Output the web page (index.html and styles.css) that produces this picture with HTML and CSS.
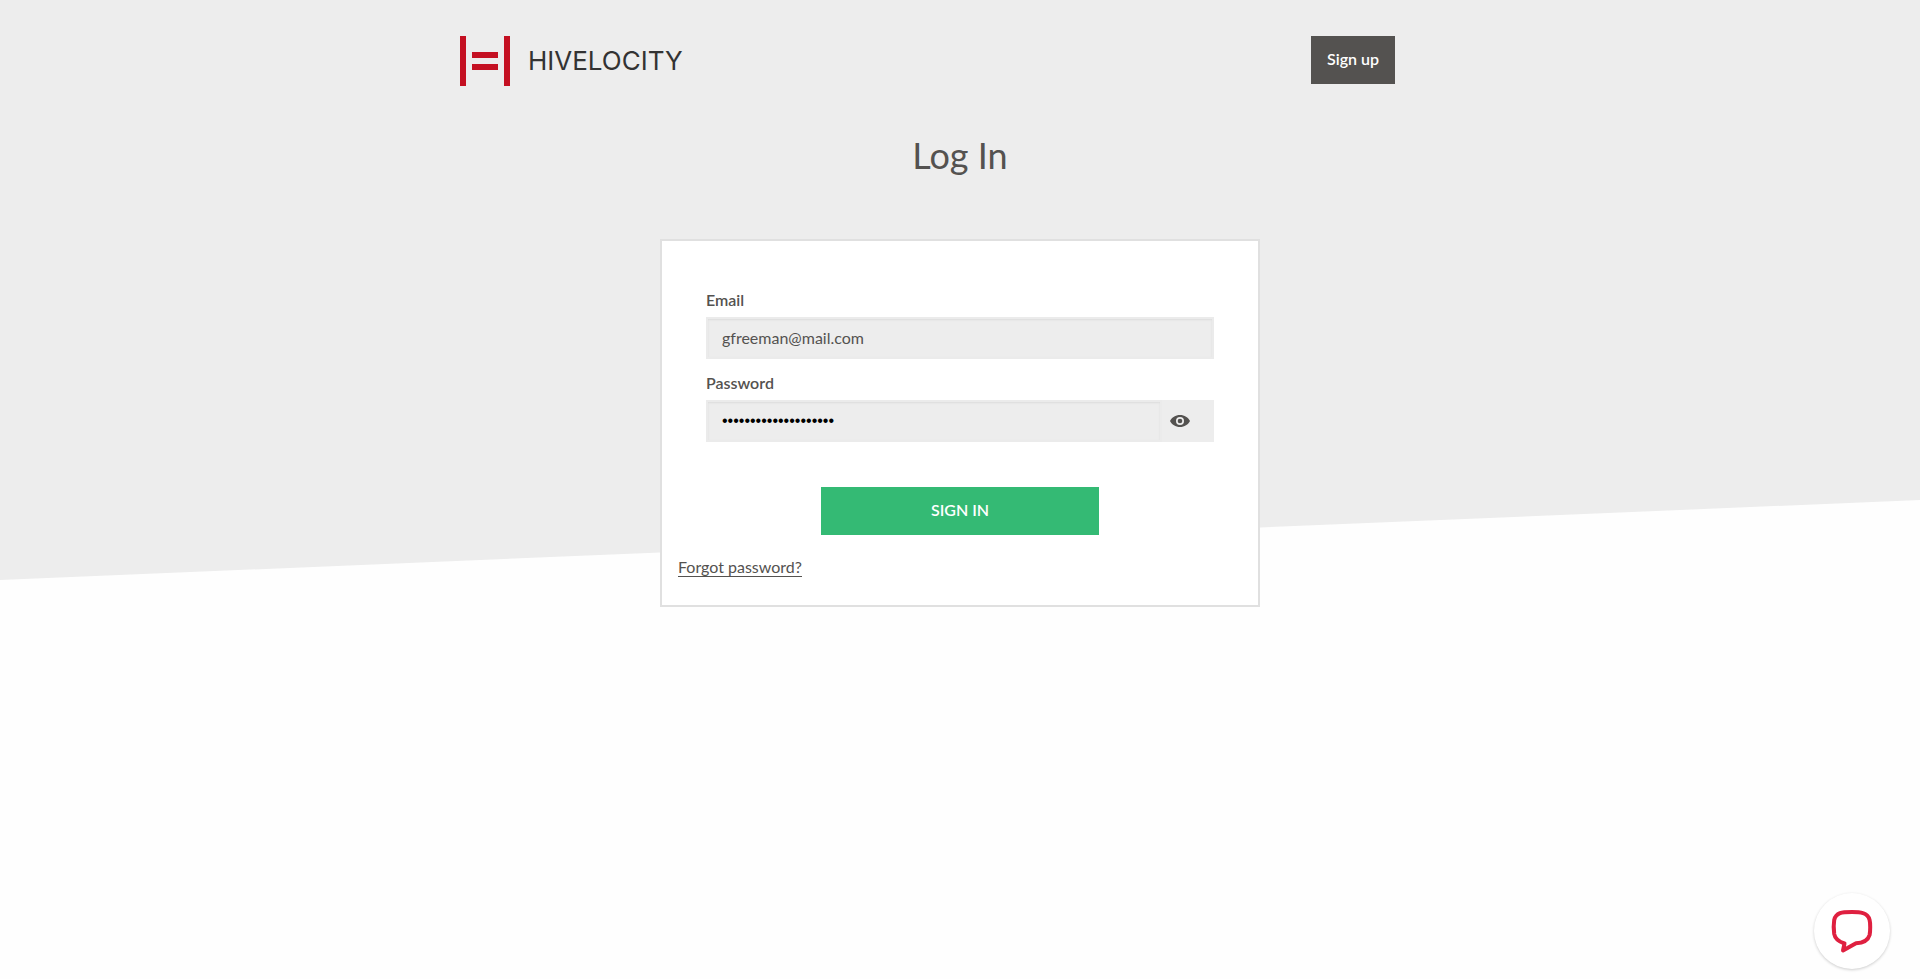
FILE: index.html
```html
<!DOCTYPE html>
<html lang="en">
<head>
    <meta charset="UTF-8">
    <meta name="viewport" content="width=device-width, initial-scale=1.0">
    <title>Log In - Hivelocity</title>
    <link rel="stylesheet" href="styles.css">
</head>
<body>

    <header class="header">
        <a class="logo" href="#">
            <svg width="50" height="50" viewBox="0 0 50 50" fill="#c41022" aria-hidden="true">
                <rect x="0" y="0" width="6" height="50"/>
                <rect x="44" y="0" width="6" height="50"/>
                <rect x="12" y="16" width="26" height="6"/>
                <rect x="12" y="28" width="26" height="6"/>
            </svg>
            <span class="logoText">HIVELOCITY</span>
        </a>
        <button class="signupBtn" type="button">Sign up</button>
    </header>

    <main class="main">
        <h1 class="title">Log In</h1>

        <form class="card">
            <div class="fields">
                <label class="label" for="email">Email</label>
                <input class="input" id="email" type="email" value="gfreeman@mail.com">

                <label class="label" for="password">Password</label>
                <div class="passwordRow">
                    <input class="input passwordInput" id="password" type="password" value="correcthorsebattery1">
                    <button class="eyeBtn" type="button" aria-label="Show password">
                        <svg width="20" height="12" viewBox="0 0 20 12" aria-hidden="true">
                            <path fill="#545250" fill-rule="evenodd" d="M10 0C5.500 0 1.800 2.400 0 6c1.800 3.600 5.500 6 10 6s8.200-2.400 10-6c-1.800-3.600-5.500-6-10-6zm0 10a4 4 0 1 1 0-8 4 4 0 0 1 0 8z"/>
                            <circle cx="10" cy="6" r="2.300" fill="#545250"/>
                        </svg>
                    </button>
                </div>

                <button class="signinBtn" type="button">SIGN IN</button>
            </div>
            <a class="forgot" href="#">Forgot password?</a>
        </form>
    </main>

    <button class="chatBtn" type="button" aria-label="Open chat">
        <svg width="42" height="44" viewBox="0 0 42 44" fill="none" stroke="#df2040" stroke-width="4" stroke-linejoin="round" aria-hidden="true">
            <path d="M21 3C15 3 11 3.400 9 4.200C6 5.400 4 7.600 3.200 11C2.700 14 2.700 21 3.200 25C4 29.500 7 32.500 13.500 34.500L12 41.500L25 34.300C32 34 37 31.500 38.600 26C39.400 22 39.400 14 38.600 11C37.700 7.300 35.300 5 32 4.100C29.500 3.300 26 3 21 3Z"/>
        </svg>
    </button>

</body>
</html>
```
FILE: styles.css
```css
* {
    box-sizing: border-box;
}

body {
    margin: 0;
    min-height: 100vh;
    font-family: Lato, "Open Sans", sans-serif;
    font-size: 16px;
    line-height: 20px;
    color: #545250;
    background-color: #fefefe;
}

/* slanted grey area behind the form */
body::before {
    content: "";
    position: absolute;
    z-index: -1;
    top: 0;
    left: 0;
    width: 100%;
    height: 580px;
    background-color: #ededed;
    clip-path: polygon(0 0, 100% 0, 100% 500px, 0 100%);
}

button {
    border: none;
    padding: 0 16px 3px;
    font-family: inherit;
    font-size: 16px;
    font-weight: 600;
    cursor: pointer;
}

.header {
    display: flex;
    justify-content: space-between;
    align-items: flex-start;
    max-width: 1000px;
    margin: 0 auto;
    padding: 36px 65px 0 0;
}

.logo {
    display: flex;
    align-items: center;
    gap: 18px;
    color: #333;
    text-decoration: none;
}

.logoText {
    font-family: Inter, sans-serif;
    font-size: 26px;
    font-weight: 400;
}

.signupBtn {
    height: 48px;
    color: white;
    background-color: #545250;
}

.main {
    padding: 0 16px 40px;
}

.title {
    margin: 46px 0 61px;
    font-size: 36px;
    font-weight: 400;
    line-height: 46px;
    text-align: center;
}

.card {
    max-width: 600px;
    margin: 0 auto;
    padding: 49px 16px 28px;
    border: 2px solid #e0e0e0;
    background-color: white;
}

.fields {
    display: flex;
    flex-direction: column;
    padding: 0 28px;
}

.label {
    margin-bottom: 7px;
    font-weight: 600;
}

.input {
    width: 100%;
    height: 42px;
    margin-bottom: 14px;
    padding: 0 14px 1px;
    border: 2px solid #ebebeb;
    border-radius: 0;
    outline: none;
    font-family: inherit;
    font-size: 16px;
    color: #545250;
    background-color: #ededed;
    box-shadow: inset 0 1px 2px #dcdcdc;
}

.passwordRow {
    display: flex;
    margin-bottom: 45px;
    background-color: #ededed;
}

.passwordInput {
    flex: 1;
    margin-bottom: 0;
    font-family: "Liberation Sans", Arial, sans-serif;
    color: black;
}

.eyeBtn {
    display: flex;
    align-items: center;
    width: 52px;
    padding: 0 0 0 8px;
    background-color: #ededed;
}

.signinBtn {
    align-self: center;
    width: 278px;
    max-width: 100%;
    height: 48px;
    margin-bottom: 22px;
    color: white;
    background-color: #34ba74;
}

.forgot {
    display: inline-block;
    color: #545250;
    border-bottom: 1px solid #545250;
    line-height: 19px;
    text-decoration: none;
}

.chatBtn {
    position: fixed;
    right: 30px;
    bottom: 10px;
    display: flex;
    justify-content: center;
    align-items: center;
    width: 76px;
    height: 76px;
    padding: 0;
    border-radius: 50%;
    background-color: white;
    box-shadow: 0 1px 3px rgba(0, 0, 0, 0.2);
}
```
